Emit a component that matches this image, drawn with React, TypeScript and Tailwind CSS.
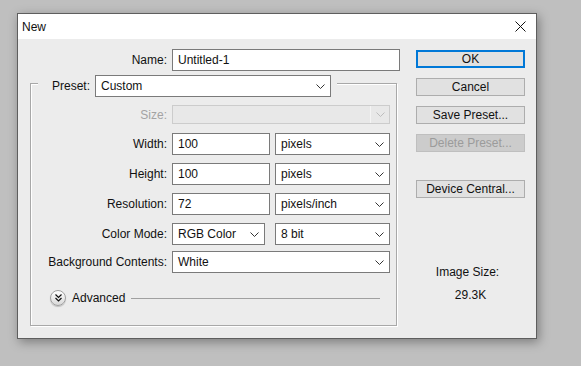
import React from "react";

const font = { fontFamily: '"Liberation Sans", Arial, sans-serif' };

function Chevron({ color = "#333" }: { color?: string }) {
  return (
    <svg width="9" height="5" viewBox="0 0 9 5" className="shrink-0">
      <polyline points="0.5,0.5 4.5,4.5 8.5,0.5" fill="none" stroke={color} strokeWidth="1" />
    </svg>
  );
}

function Select({ value, w, disabled }: { value: string; w: string; disabled?: boolean }) {
  if (disabled) {
    return (
      <div className={`${w} h-[19px] border border-[#cccccc] bg-[#e8e8e8] flex items-stretch justify-end`}>
        <div className="w-[19px] border-l border-[#f4f4f4] flex items-center justify-center">
          <Chevron color="#bdbdbd" />
        </div>
      </div>
    );
  }
  return (
    <div className={`${w} h-[22px] border border-[#7a7a7a] bg-white flex items-center justify-between pl-[5px] pr-[5px]`}>
      <span className="text-[12px] text-[#111] leading-none">{value}</span>
      <Chevron />
    </div>
  );
}

function Input({ value, w }: { value: string; w: string }) {
  return (
    <div className={`${w} h-[22px] border border-[#7a7a7a] bg-white flex items-center pl-[5px]`}>
      <span className="text-[12px] text-[#111] leading-none">{value}</span>
    </div>
  );
}

function Row({ label, children, mt, disabled }: { label: string; children: React.ReactNode; mt: string; disabled?: boolean }) {
  return (
    <div className={`flex items-center ${mt}`}>
      <div className={`w-[136px] text-right text-[12px] leading-none ${disabled ? "text-[#a3a3a3]" : "text-[#111]"}`}>{label}</div>
      <div className="ml-[5px] flex items-center gap-[5px]">{children}</div>
    </div>
  );
}

function Btn({ label, primary, disabled, mt }: { label: string; primary?: boolean; disabled?: boolean; mt: string }) {
  const cls = primary
    ? "border-2 border-[#0078d7] bg-[#e1e1e1] text-[#111]"
    : disabled
    ? "border border-[#bfbfbf] bg-[#cccccc] text-[#9b9b9b]"
    : "border border-[#adadad] bg-[#e1e1e1] text-[#111]";
  return (
    <div className={`${mt} w-[109px] h-[18px] flex items-center justify-center text-[12px] leading-none ${cls}`}>
      {label}
    </div>
  );
}

export default function App() {
  return (
    <div className="w-[581px] h-[366px] bg-[#bfbfbf] pl-[17px] pt-[13px] overflow-hidden" style={font}>
      <div className="w-[520px] h-[326px] border border-[#5e5e5e] bg-[#ececec] flex flex-col shadow-[2px_3px_10px_rgba(0,0,0,0.35)]">
        {/* title bar */}
        <div className="h-[25px] bg-white flex items-center justify-between pl-[4px] pr-[10px] shrink-0">
          <span className="text-[12px] text-[#111] leading-none">New</span>
          <svg width="11" height="11" viewBox="0 0 11 11">
            <path d="M0.5 0.5 L10.5 10.5 M10.5 0.5 L0.5 10.5" stroke="#111" strokeWidth="1" />
          </svg>
        </div>
        {/* body */}
        <div className="flex flex-1">
          {/* left */}
          <div className="w-[382px] flex flex-col">
            <div className="flex items-center mt-[10px]">
              <div className="w-[149px] text-right text-[12px] text-[#111] leading-none">Name:</div>
              <div className="ml-[5px]">
                <Input value="Untitled-1" w="w-[228px]" />
              </div>
            </div>
            {/* group box */}
            <div className="relative ml-[12px] mt-[12px] w-[367px] h-[243px] border border-[#a8a8a8] shadow-[inset_1px_1px_0_#ffffff,1px_1px_0_#ffffff]">
              <div className="absolute left-[7px] top-[-9px] bg-[#ececec] flex items-center pl-[14px] pr-[6px]">
                <span className="text-[12px] text-[#111] leading-none">Preset:</span>
                <div className="ml-[5px]">
                  <Select value="Custom" w="w-[236px]" />
                </div>
              </div>
              <div className="flex flex-col">
                <Row label="Size:" mt="mt-[21px]" disabled>
                  <Select value="" w="w-[218px]" disabled />
                </Row>
                <Row label="Width:" mt="mt-[9px]">
                  <Input value="100" w="w-[98px]" />
                  <Select value="pixels" w="w-[115px]" />
                </Row>
                <Row label="Height:" mt="mt-[8px]">
                  <Input value="100" w="w-[98px]" />
                  <Select value="pixels" w="w-[115px]" />
                </Row>
                <Row label="Resolution:" mt="mt-[8px]">
                  <Input value="72" w="w-[98px]" />
                  <Select value="pixels/inch" w="w-[115px]" />
                </Row>
                <Row label="Color Mode:" mt="mt-[8px]">
                  <Select value="RGB Color" w="w-[93px]" />
                  <div className="ml-[5px]">
                    <Select value="8 bit" w="w-[115px]" />
                  </div>
                </Row>
                <Row label="Background Contents:" mt="mt-[6px]">
                  <Select value="White" w="w-[218px]" />
                </Row>
                <div className="flex items-center mt-[17px] ml-[19px]">
                  <div className="w-[16px] h-[16px] rounded-full border border-[#a0a0a0] bg-[linear-gradient(#ffffff,#d8d8d8)] shadow-[0_1px_1px_rgba(0,0,0,0.2)] flex items-center justify-center">
                    <svg width="7" height="8" viewBox="0 0 7 8">
                      <polyline points="0.5,0.5 3.5,3.5 6.5,0.5" fill="none" stroke="#111" strokeWidth="1.2" />
                      <polyline points="0.5,4 3.5,7 6.5,4" fill="none" stroke="#111" strokeWidth="1.2" />
                    </svg>
                  </div>
                  <span className="ml-[6px] text-[12px] text-[#111] leading-none">Advanced</span>
                  <div className="ml-[6px] w-[249px] h-px bg-[#a0a0a0]" />
                </div>
              </div>
            </div>
          </div>
          {/* right */}
          <div className="ml-[16px] w-[109px] flex flex-col items-center">
            <Btn label="OK" primary mt="mt-[11px]" />
            <Btn label="Cancel" mt="mt-[10px]" />
            <Btn label="Save Preset..." mt="mt-[10px]" />
            <Btn label="Delete Preset..." disabled mt="mt-[10px]" />
            <Btn label="Device Central..." mt="mt-[28px]" />
            <div className="mt-[68px] text-[12px] text-[#111] leading-none -ml-[6px]">Image Size:</div>
            <div className="mt-[11px] text-[12px] text-[#111] leading-none">29.3K</div>
          </div>
        </div>
      </div>
    </div>
  );
}
